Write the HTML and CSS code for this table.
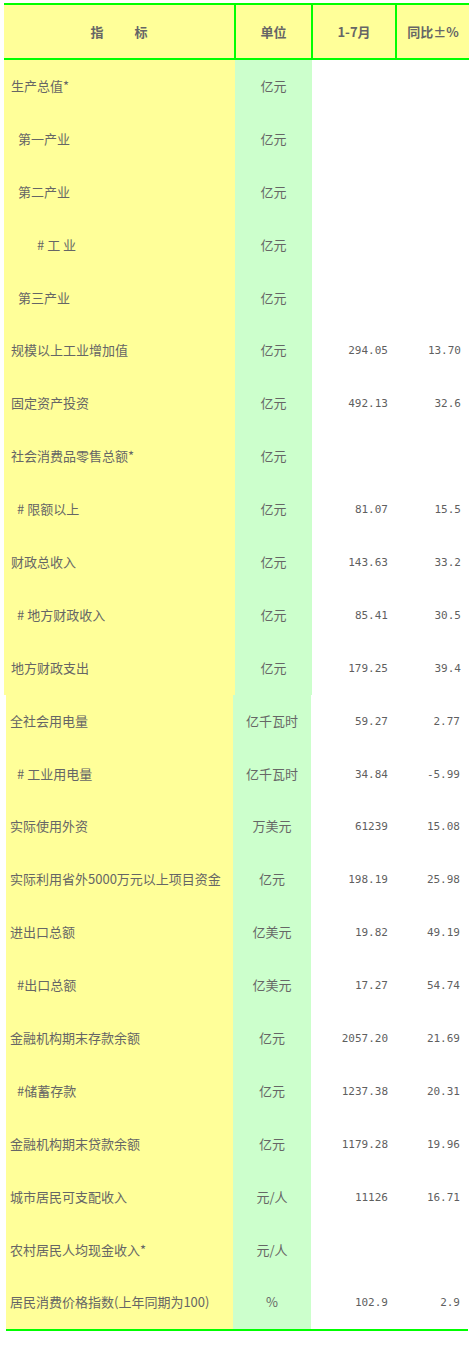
FILE: index.html
```html
<!DOCTYPE html>
<html lang="zh">
<head>
<meta charset="utf-8">
<title>主要经济指标</title>
<link rel="stylesheet" href="styles.css">
</head>
<body>
<div class="report">
  <div class="head">
    <div class="hcell">指<span class="hgap"></span>标</div>
    <div class="hcell">单位</div>
    <div class="hcell">1-7月</div>
    <div class="hcell last">同比±%</div>
  </div>

  <div class="block upper">
    <div class="row"><div class="name">生产总值*</div><div class="unit">亿元</div><div class="num"></div><div class="num"></div></div>
    <div class="row"><div class="name ind1">第一产业</div><div class="unit">亿元</div><div class="num"></div><div class="num"></div></div>
    <div class="row"><div class="name ind1">第二产业</div><div class="unit">亿元</div><div class="num"></div><div class="num"></div></div>
    <div class="row"><div class="name ind2"># 工 业</div><div class="unit">亿元</div><div class="num"></div><div class="num"></div></div>
    <div class="row"><div class="name ind1">第三产业</div><div class="unit">亿元</div><div class="num"></div><div class="num"></div></div>
    <div class="row"><div class="name">规模以上工业增加值</div><div class="unit">亿元</div><div class="num">294.05</div><div class="num">13.70</div></div>
    <div class="row"><div class="name">固定资产投资</div><div class="unit">亿元</div><div class="num">492.13</div><div class="num">32.6</div></div>
    <div class="row"><div class="name">社会消费品零售总额*</div><div class="unit">亿元</div><div class="num"></div><div class="num"></div></div>
    <div class="row"><div class="name ind3"># 限额以上</div><div class="unit">亿元</div><div class="num">81.07</div><div class="num">15.5</div></div>
    <div class="row"><div class="name">财政总收入</div><div class="unit">亿元</div><div class="num">143.63</div><div class="num">33.2</div></div>
    <div class="row"><div class="name ind3"># 地方财政收入</div><div class="unit">亿元</div><div class="num">85.41</div><div class="num">30.5</div></div>
    <div class="row"><div class="name">地方财政支出</div><div class="unit">亿元</div><div class="num">179.25</div><div class="num">39.4</div></div>
  </div>

  <div class="block lower">
    <div class="row"><div class="name">全社会用电量</div><div class="unit">亿千瓦时</div><div class="num">59.27</div><div class="num">2.77</div></div>
    <div class="row"><div class="name ind3"># 工业用电量</div><div class="unit">亿千瓦时</div><div class="num">34.84</div><div class="num">-5.99</div></div>
    <div class="row"><div class="name">实际使用外资</div><div class="unit">万美元</div><div class="num">61239</div><div class="num">15.08</div></div>
    <div class="row"><div class="name">实际利用省外5000万元以上项目资金</div><div class="unit">亿元</div><div class="num">198.19</div><div class="num">25.98</div></div>
    <div class="row"><div class="name">进出口总额</div><div class="unit">亿美元</div><div class="num">19.82</div><div class="num">49.19</div></div>
    <div class="row"><div class="name ind3">#出口总额</div><div class="unit">亿美元</div><div class="num">17.27</div><div class="num">54.74</div></div>
    <div class="row"><div class="name">金融机构期末存款余额</div><div class="unit">亿元</div><div class="num">2057.20</div><div class="num">21.69</div></div>
    <div class="row"><div class="name ind3">#储蓄存款</div><div class="unit">亿元</div><div class="num">1237.38</div><div class="num">20.31</div></div>
    <div class="row"><div class="name">金融机构期末贷款余额</div><div class="unit">亿元</div><div class="num">1179.28</div><div class="num">19.96</div></div>
    <div class="row"><div class="name">城市居民可支配收入</div><div class="unit">元/人</div><div class="num">11126</div><div class="num">16.71</div></div>
    <div class="row"><div class="name">农村居民人均现金收入*</div><div class="unit">元/人</div><div class="num"></div><div class="num"></div></div>
    <div class="row"><div class="name">居民消费价格指数(上年同期为100)</div><div class="unit">%</div><div class="num">102.9</div><div class="num">2.9</div></div>
  </div>
</div>
</body>
</html>
```

FILE: styles.css
```css
html, body {
  margin: 0;
  padding: 0;
  background: #ffffff;
}

body {
  font-family: "Noto Sans CJK SC", "Liberation Sans", sans-serif;
  font-size: 13px;
  color: #666666;
}

.report {
  padding-top: 3px;
  width: 472px;
}

.head {
  margin-left: 4px;
  width: 465px;
  display: grid;
  grid-template-columns: 232px 77px 84px 72px;
  border-top: 2px solid #00ff00;
  border-bottom: 2px solid #00ff00;
  background: #ffff99;
}

.hcell {
  height: 53px;
  display: flex;
  align-items: center;
  justify-content: center;
  font-weight: bold;
  border-right: 2px solid #00ff00;
  white-space: nowrap;
}

.hcell.last {
  border-right: none;
}

.hgap {
  display: inline-block;
  width: 31px;
}

.block .row {
  display: grid;
  height: 52.9px;
  align-items: center;
}

.upper {
  margin-left: 4px;
  width: 465px;
}

.upper .row {
  grid-template-columns: 231px 77px 84px 73px;
}

.lower {
  margin-left: 6px;
  width: 462px;
  border-bottom: 2px solid #00ff00;
}

.lower .row {
  grid-template-columns: 227px 78px 85px 72px;
}

.row > div {
  height: 100%;
  display: flex;
  align-items: center;
  white-space: nowrap;
}

.name {
  background: #ffff99;
  padding-left: 7px;
  padding-bottom: 2px;
  box-sizing: border-box;
}

.lower .name {
  padding-left: 4px;
}

.upper .name.ind1 { padding-left: 14px; }
.upper .name.ind2 { padding-left: 33px; }
.name.ind3 { padding-left: 13px; }
.lower .name.ind3 { padding-left: 11px; }

.unit {
  background: #ccffcc;
  justify-content: center;
  padding-bottom: 2px;
  box-sizing: border-box;
}

.num {
  justify-content: flex-end;
  padding-right: 8px;
  font-family: "DejaVu Sans Mono", "Liberation Mono", monospace;
  font-size: 11px;
  color: #5f5f5f;
}
```
